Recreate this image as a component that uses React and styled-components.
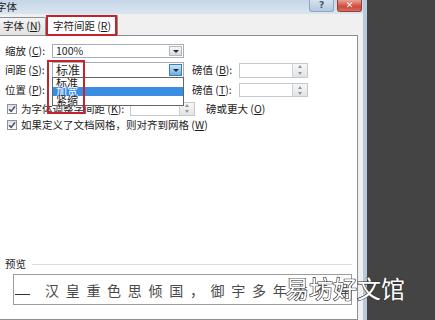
import React from "react";
import styled, { createGlobalStyle } from "styled-components";

const GlobalStyle = createGlobalStyle`
  html, body {
    margin: 0;
    padding: 0;
  }
  body {
    background: #444444;
    font-family: "Noto Sans CJK SC", "Liberation Sans", sans-serif;
    color: #1c1c1c;
  }
`;

const Screen = styled.div`
  position: relative;
  width: 435px;
  height: 320px;
  overflow: hidden;
  display: flex;
  background: #444444;
`;

const Dialog = styled.div`
  width: 363px;
  flex: none;
  display: flex;
  flex-direction: column;
  background: #f0f0f0;
  border-right: 4px solid #b7c9da;
`;

const TitleBar = styled.div`
  height: 14px;
  flex: none;
  display: flex;
  justify-content: space-between;
  align-items: flex-start;
  padding-right: 1px;
  background: linear-gradient(#c6d6e6, #dae5f0);
`;

const Title = styled.span`
  margin-left: -4px;
  font-size: 10.5px;
  line-height: 13px;
`;

const Caption = styled.div`
  display: flex;
  gap: 3px;
`;

const CapButton = styled.div`
  box-sizing: border-box;
  width: 25px;
  height: 12px;
  border: 1px solid ${(p) => (p.$close ? "#9c3c31" : "#8ea6bf")};
  border-top: none;
  border-radius: 0 0 3px 3px;
  background: ${(p) =>
    p.$close
      ? "linear-gradient(#eba295, #cb4a3c 60%, #d86e5f)"
      : "linear-gradient(#d5e2ef, #b3c8dc)"};
  color: ${(p) => (p.$close ? "#ffffff" : "#3e5670")};
  font: bold 9px/11px "DejaVu Sans", sans-serif;
  text-align: center;
`;

const Body = styled.div`
  flex: 1;
  min-height: 0;
  display: flex;
  flex-direction: column;
  padding: 1px 5px 0 0;
`;

const Tabs = styled.div`
  height: 20px;
  flex: none;
  display: flex;
  align-items: flex-end;
`;

const Tab = styled.div`
  position: relative;
  z-index: ${(p) => (p.$active ? 2 : 0)};
  box-sizing: border-box;
  width: ${(p) => p.$w}px;
  height: ${(p) => (p.$active ? 21 : 18)}px;
  margin-left: ${(p) => p.$ml || 0}px;
  margin-bottom: ${(p) => (p.$active ? -1 : 0)}px;
  border: 1px solid #8c8f96;
  border-bottom: none;
  border-radius: 2px 2px 0 0;
  background: ${(p) => (p.$active ? "#ffffff" : "linear-gradient(#f4f4f4, #e2e2e2)")};
  font-size: 10.5px;
  line-height: ${(p) => (p.$active ? 19 : 16)}px;
  text-align: center;
  white-space: nowrap;
`;

const Key = styled.span`
  text-decoration: underline;
`;

const RedBox = styled.div`
  position: absolute;
  z-index: 6;
  box-sizing: border-box;
  left: ${(p) => p.$x}px;
  top: ${(p) => p.$y}px;
  width: ${(p) => p.$w}px;
  height: ${(p) => p.$h}px;
  border: 2px solid #c4232b;
  pointer-events: none;
`;

const Panel = styled.div`
  flex: 1;
  display: flex;
  flex-direction: column;
  margin-left: -1px;
  padding: 6px 0 0 5px;
  background: #ffffff;
  border: 1px solid #8c8f96;
`;

const Row = styled.div`
  position: relative;
  display: flex;
  align-items: center;
  height: ${(p) => p.$h}px;
  flex: none;
`;

const Label = styled.span`
  width: ${(p) => p.$w}px;
  flex: none;
  margin-left: ${(p) => p.$ml || 0}px;
  font-size: 10.5px;
  line-height: 14px;
  white-space: nowrap;
`;

const Select = styled.div`
  position: relative;
  box-sizing: border-box;
  width: 132px;
  height: ${(p) => p.$h}px;
  flex: none;
  margin-left: -1px;
  display: flex;
  align-items: center;
  background: #ffffff;
  border: 1px solid #a7aeb7;
`;

const SelectValue = styled.span`
  flex: 1;
  padding-left: 3px;
  font-size: ${(p) => (p.$big ? 12 : 10.5)}px;
  line-height: 12px;
  white-space: nowrap;
`;

const ArrowButton = styled.span`
  box-sizing: border-box;
  width: 13px;
  align-self: stretch;
  margin: 1px;
  display: flex;
  align-items: center;
  justify-content: center;
  border: 1px solid ${(p) => (p.$hot ? "#3c7fb1" : "#b5b9bf")};
  background: ${(p) =>
    p.$hot ? "linear-gradient(#c9e6fb, #6eaee0)" : "linear-gradient(#f7f7f7, #d9d9d9)"};

  &::after {
    content: "";
    border-left: 3px solid transparent;
    border-right: 3px solid transparent;
    border-top: 3px solid #1e2a36;
  }
`;

const DropList = styled.div`
  position: absolute;
  z-index: 5;
  top: 100%;
  left: -1px;
  box-sizing: border-box;
  width: 132px;
  height: 29px;
  overflow: hidden;
  background: #ffffff;
  border: 1px solid #646464;
`;

const Option = styled.div`
  height: 9px;
  padding-left: 3px;
  font-size: 11px;
  line-height: 9px;
  white-space: nowrap;
  background: ${(p) => (p.$on ? "#3a8de3" : "transparent")};
  color: ${(p) => (p.$on ? "#ffffff" : "#1c1c1c")};
`;

const Spin = styled.div`
  box-sizing: border-box;
  width: ${(p) => p.$w}px;
  height: ${(p) => p.$h}px;
  flex: none;
  margin-left: ${(p) => p.$ml || 0}px;
  display: flex;
  justify-content: flex-end;
  background: #ffffff;
  border: 1px solid #c3c8ce;
`;

const SpinButtons = styled.div`
  width: 14px;
  display: flex;
  flex-direction: column;
  border-left: 1px solid #cdd1d6;
  background: linear-gradient(#f6f6f6, #e4e4e4);
`;

const SpinArrow = styled.span`
  flex: 1;
  display: flex;
  align-items: center;
  justify-content: center;

  &::after {
    content: "";
    border-left: 2.5px solid transparent;
    border-right: 2.5px solid transparent;
    ${(p) => (p.$down ? "border-top" : "border-bottom")}: 3px solid #8d97a3;
  }
`;

const Check = styled.span`
  box-sizing: border-box;
  width: 10px;
  height: 10px;
  flex: none;
  margin: 0 4px 0 2px;
  display: flex;
  align-items: center;
  justify-content: center;
  border: 1px solid #8e8f8f;
  background: linear-gradient(#dedede, #ffffff);
`;

const CheckLabel = styled.span`
  width: ${(p) => (p.$w ? `${p.$w}px` : "auto")};
  flex: none;
  margin-left: ${(p) => p.$ml || 0}px;
  font-size: 10.5px;
  line-height: 14px;
  white-space: nowrap;
`;

const PreviewHead = styled.div`
  margin-top: 126px;
  height: 12px;
  display: flex;
  align-items: center;
  padding-right: 5px;
`;

const HeadText = styled.span`
  font-size: 10.5px;
  line-height: 12px;
`;

const HeadLine = styled.span`
  flex: 1;
  height: 1px;
  margin-left: 6px;
  background: #d9dde2;
`;

const PreviewBox = styled.div`
  box-sizing: border-box;
  height: 31px;
  margin: 4px 5px 0 8px;
  display: flex;
  align-items: center;
  overflow: hidden;
  white-space: nowrap;
  border: 1px solid #9c9c9c;
`;

const Caret = styled.span`
  width: 15px;
  height: 1px;
  flex: none;
  align-self: flex-end;
  margin: 0 15px 9px 1px;
  background: #333333;
`;

const PreviewText = styled.span`
  font-size: 14px;
  letter-spacing: 6.7px;
  line-height: 18px;
  color: #4a4a4a;
`;

const Watermark = styled.div`
  position: absolute;
  z-index: 10;
  left: 285px;
  top: 275px;
  font-size: 24px;
  line-height: 26px;
  color: #ffffff;
  -webkit-text-stroke: 1.2px #2a2a2a;
  paint-order: stroke fill;
  white-space: nowrap;
`;

const SpinBox = ({ w, h, ml }) => (
  <Spin $w={w} $h={h} $ml={ml}>
    <SpinButtons>
      <SpinArrow />
      <SpinArrow $down />
    </SpinButtons>
  </Spin>
);

const CheckMark = () => (
  <svg width="8" height="8" viewBox="0 0 8 8">
    <path d="M1 4.2 L3.2 6.4 L7 1.4" fill="none" stroke="#3b4a66" strokeWidth="1.5" />
  </svg>
);

const App = () => {
  const spacingOptions = ["标准", "加宽", "紧缩"];

  return (
    <>
      <GlobalStyle />
      <Screen>
        <Dialog>
          <TitleBar>
            <Title>字体</Title>
            <Caption>
              <CapButton>?</CapButton>
              <CapButton $close>✕</CapButton>
            </Caption>
          </TitleBar>
          <Body>
            <Tabs>
              <Tab $w={48} $ml={-2}>
                字体 (<Key>N</Key>)
              </Tab>
              <Tab $w={72} $active>
                字符间距 (<Key>R</Key>)
                <RedBox $x={-1} $y={-1} $w={71} $h={21} />
              </Tab>
            </Tabs>
            <Panel>
              <Row $h={18}>
                <Label $w={48}>缩放 (<Key>C</Key>):</Label>
                <Select $h={14}>
                  <SelectValue>100%</SelectValue>
                  <ArrowButton />
                </Select>
              </Row>
              <Row $h={20}>
                <Label $w={48}>间距 (<Key>S</Key>):</Label>
                <Select $h={16}>
                  <SelectValue $big>标准</SelectValue>
                  <ArrowButton $hot />
                  <DropList>
                    {spacingOptions.map((opt) => (
                      <Option key={opt} $on={opt === "加宽"}>
                        {opt}
                      </Option>
                    ))}
                  </DropList>
                  <RedBox $x={-6} $y={-3} $w={38} $h={54} />
                </Select>
                <Label $w={47} $ml={8}>磅值 (<Key>B</Key>):</Label>
                <SpinBox w={69} h={15} />
              </Row>
              <Row $h={20}>
                <Label $w={48}>位置 (<Key>P</Key>):</Label>
                <Select $h={14}>
                  <SelectValue />
                  <ArrowButton />
                </Select>
                <Label $w={47} $ml={8}>磅值 (<Key>T</Key>):</Label>
                <SpinBox w={69} h={14} />
              </Row>
              <Row $h={17}>
                <Check>
                  <CheckMark />
                </Check>
                <CheckLabel $w={109}>为字体调整字间距 (<Key>K</Key>):</CheckLabel>
                <SpinBox w={65} h={14} />
                <CheckLabel $ml={11}>磅或更大 (<Key>O</Key>)</CheckLabel>
              </Row>
              <Row $h={15}>
                <Check>
                  <CheckMark />
                </Check>
                <CheckLabel>如果定义了文档网格，则对齐到网格 (<Key>W</Key>)</CheckLabel>
              </Row>
              <PreviewHead>
                <HeadText>预览</HeadText>
                <HeadLine />
              </PreviewHead>
              <PreviewBox>
                <Caret />
                <PreviewText>汉皇重色思倾国，御宇多年求不得</PreviewText>
              </PreviewBox>
            </Panel>
          </Body>
        </Dialog>
        <Watermark>易坊好文馆</Watermark>
      </Screen>
    </>
  );
};

export default App;
